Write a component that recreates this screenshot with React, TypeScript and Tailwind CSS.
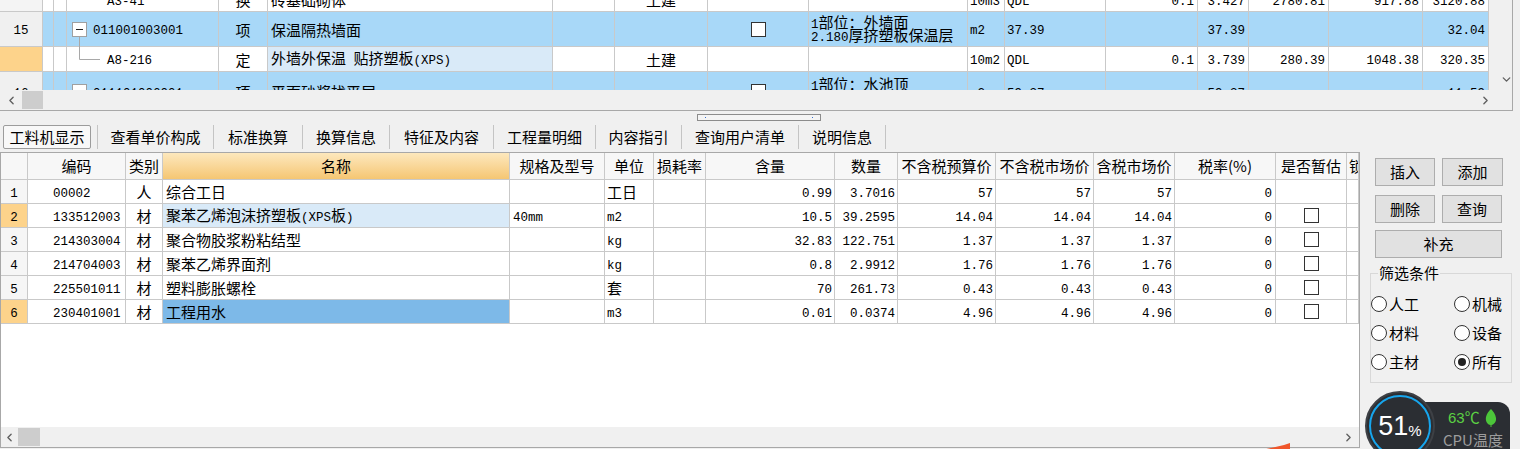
import React from "react";
import { ChevronLeft, ChevronRight, ChevronDown } from "lucide-react";

const UI = "font-['Noto_Sans_CJK_SC','Liberation_Sans',sans-serif]";

// split text into ascii / cjk runs so ascii gets the narrow mono look
function T({ s }: { s: string }) {
  const parts = s.match(/[\x00-\x7f]+|[^\x00-\x7f]+/g) ?? [];
  return (
    <span className="leading-[16px] whitespace-pre">
      {parts.map((p, i) =>
        /^[\x00-\x7f]+$/.test(p) ? (
          <span key={i} className="font-['Liberation_Mono',monospace] text-[12.5px]">
            {p}
          </span>
        ) : (
          <span key={i} className="font-['Noto_Sans_CJK_SC',sans-serif] text-[15px]">
            {p}
          </span>
        )
      )}
    </span>
  );
}

function Cell({ w, className = "", children }: { w: string; className?: string; children?: React.ReactNode }) {
  return (
    <div
      className={`${w} shrink-0 h-full border-r border-b border-[#c9c9c9] flex items-center overflow-hidden whitespace-nowrap ${className}`}
    >
      {children}
    </div>
  );
}

function Check() {
  return <div className="w-[15px] h-[15px] border border-[#333] bg-white" />;
}

function TreeBox({ line }: { line?: boolean }) {
  return (
    <div className="relative w-[15px] h-[15px] border border-[#a0a0a0] bg-white flex items-center justify-center shrink-0">
      <div className="w-[7px] h-px bg-[#222]" />
      {line && <div className="absolute top-[14px] left-[6px] w-px h-[12px] bg-[#a8a8a8]" />}
    </div>
  );
}

/* ---------------- top grid ---------------- */

const TW = [
  "w-[43px]", "w-[11px]", "w-[13px]", "w-[152px]", "w-[49px]", "w-[285px]", "w-[62px]", "w-[93px]",
  "w-[101px]", "w-[159px]", "w-[37px]", "w-[101px]", "w-[92px]", "w-[51px]", "w-[80px]", "w-[94px]", "w-[66px]",
];

function TopGrid() {
  const blue = "bg-[#a8d8f8]";
  return (
    <div className="h-[111px] w-[1513px] border-r border-b border-[#a8a8a8] bg-white flex flex-col">
      <div className="flex h-[90px]">
        <div className="w-[1489px] h-full overflow-hidden">
          <div className="-mt-[12px]">
            {/* partial row above */}
            <div className="flex h-[24px]">
              <Cell w={TW[0]} className="bg-[#f4f4f4]" />
              <Cell w={TW[1]} />
              <Cell w={TW[2]} />
              <Cell w={TW[3]} className="pl-[40px]"><T s="A3-41" /></Cell>
              <Cell w={TW[4]} className="justify-center"><T s="换" /></Cell>
              <Cell w={TW[5]} className="pl-[3px]"><T s="砖基础砌体" /></Cell>
              <Cell w={TW[6]} />
              <Cell w={TW[7]} className="justify-center"><T s="土建" /></Cell>
              <Cell w={TW[8]} />
              <Cell w={TW[9]} />
              <Cell w={TW[10]} className="pl-[2px]"><T s="10m3" /></Cell>
              <Cell w={TW[11]} className="pl-[2px]"><T s="QDL" /></Cell>
              <Cell w={TW[12]} className="justify-end pr-[3px]"><T s="0.1" /></Cell>
              <Cell w={TW[13]} className="justify-end pr-[3px]"><T s="3.427" /></Cell>
              <Cell w={TW[14]} className="justify-end pr-[3px]"><T s="2780.81" /></Cell>
              <Cell w={TW[15]} className="justify-end pr-[3px]"><T s="917.88" /></Cell>
              <Cell w={TW[16]} className="justify-end pr-[3px]"><T s="3120.88" /></Cell>
            </div>

            {/* row 15 */}
            <div className="flex h-[35px]">
              <Cell w={TW[0]} className="bg-[#f0f0f0] justify-center"><T s="15" /></Cell>
              <Cell w={TW[1]} className={blue} />
              <Cell w={TW[2]} className={blue} />
              <Cell w={TW[3]} className={`${blue} pl-[5px] gap-[6px] overflow-visible`}>
                <TreeBox line />
                <T s="011001003001" />
              </Cell>
              <Cell w={TW[4]} className={`${blue} justify-center`}><T s="项" /></Cell>
              <Cell w={TW[5]} className={`${blue} pl-[3px]`}><T s="保温隔热墙面" /></Cell>
              <Cell w={TW[6]} className={blue} />
              <Cell w={TW[7]} className={blue} />
              <Cell w={TW[8]} className={`${blue} justify-center`}><Check /></Cell>
              <Cell w={TW[9]} className={`${blue} pl-[2px] flex-col !items-start justify-center`}>
                <div className="h-[13px] flex items-center"><T s="1部位：外墙面" /></div>
                <div className="h-[13px] flex items-center"><T s="2.180厚挤塑板保温层" /></div>
              </Cell>
              <Cell w={TW[10]} className={`${blue} pl-[2px]`}><T s="m2" /></Cell>
              <Cell w={TW[11]} className={`${blue} pl-[2px]`}><T s="37.39" /></Cell>
              <Cell w={TW[12]} className={blue} />
              <Cell w={TW[13]} className={`${blue} justify-end pr-[3px]`}><T s="37.39" /></Cell>
              <Cell w={TW[14]} className={blue} />
              <Cell w={TW[15]} className={blue} />
              <Cell w={TW[16]} className={`${blue} justify-end pr-[3px]`}><T s="32.04" /></Cell>
            </div>

            {/* row A8-216 */}
            <div className="flex h-[25px]">
              <Cell w={TW[0]} className="bg-[#fdd38b]" />
              <Cell w={TW[1]} />
              <Cell w={TW[2]} />
              <Cell w={TW[3]}>
                <svg width="40" height="24" className="shrink-0">
                  <path d="M12.5 0 V12.5 H33" stroke="#a8a8a8" strokeWidth="1" fill="none" />
                </svg>
                <T s="A8-216" />
              </Cell>
              <Cell w={TW[4]} className="justify-center"><T s="定" /></Cell>
              <Cell w={TW[5]} className="bg-[#d9eaf8] pl-[3px]"><T s="外墙外保温 贴挤塑板(XPS)" /></Cell>
              <Cell w={TW[6]} />
              <Cell w={TW[7]} className="justify-center"><T s="土建" /></Cell>
              <Cell w={TW[8]} />
              <Cell w={TW[9]} />
              <Cell w={TW[10]} className="pl-[2px]"><T s="10m2" /></Cell>
              <Cell w={TW[11]} className="pl-[2px]"><T s="QDL" /></Cell>
              <Cell w={TW[12]} className="justify-end pr-[3px]"><T s="0.1" /></Cell>
              <Cell w={TW[13]} className="justify-end pr-[3px]"><T s="3.739" /></Cell>
              <Cell w={TW[14]} className="justify-end pr-[3px]"><T s="280.39" /></Cell>
              <Cell w={TW[15]} className="justify-end pr-[3px]"><T s="1048.38" /></Cell>
              <Cell w={TW[16]} className="justify-end pr-[3px]"><T s="320.35" /></Cell>
            </div>

            {/* row 16 (clipped by the scroll area) */}
            <div className="flex h-[40px]">
              <Cell w={TW[0]} className="bg-[#f0f0f0] justify-center"><T s="16" /></Cell>
              <Cell w={TW[1]} className={blue} />
              <Cell w={TW[2]} className={blue} />
              <Cell w={TW[3]} className={`${blue} pl-[5px] gap-[6px]`}>
                <TreeBox />
                <T s="011101006001" />
              </Cell>
              <Cell w={TW[4]} className={`${blue} justify-center`}><T s="项" /></Cell>
              <Cell w={TW[5]} className={`${blue} pl-[3px]`}><T s="平面砂浆找平层" /></Cell>
              <Cell w={TW[6]} className={blue} />
              <Cell w={TW[7]} className={blue} />
              <Cell w={TW[8]} className={`${blue} justify-center`}><Check /></Cell>
              <Cell w={TW[9]} className={`${blue} pl-[2px] flex-col !items-start justify-center`}>
                <div className="h-[13px] flex items-center"><T s="1部位：水池顶" /></div>
                <div className="h-[13px] flex items-center"><T s="2.20厚1:3水泥砂浆" /></div>
              </Cell>
              <Cell w={TW[10]} className={`${blue} pl-[2px]`}><T s="m2" /></Cell>
              <Cell w={TW[11]} className={`${blue} pl-[2px]`}><T s="59.37" /></Cell>
              <Cell w={TW[12]} className={blue} />
              <Cell w={TW[13]} className={`${blue} justify-end pr-[3px]`}><T s="59.37" /></Cell>
              <Cell w={TW[14]} className={blue} />
              <Cell w={TW[15]} className={blue} />
              <Cell w={TW[16]} className={`${blue} justify-end pr-[3px]`}><T s="11.59" /></Cell>
            </div>
          </div>
        </div>
        <div className="w-[23px] bg-[#f0f0f0] flex flex-col justify-end items-center pb-[4px] pl-[12px]">
          <ChevronDown size={13} strokeWidth={2.5} className="text-[#606060]" />
        </div>
      </div>
      <div className="h-[20px] flex items-center bg-[#f0f0f0]">
        <div className="w-[22px] flex justify-center">
          <ChevronLeft size={13} strokeWidth={2.5} className="text-[#606060]" />
        </div>
        <div className="w-[21px] h-[18px] bg-[#cdcdcd]" />
        <div className="flex-1" />
        <div className="w-[17px] mr-[18px] flex justify-center">
          <ChevronRight size={13} strokeWidth={2.5} className="text-[#606060]" />
        </div>
      </div>
    </div>
  );
}

/* ---------------- tabs ---------------- */

const TABS = [
  { label: "查看单价构成", w: "w-[115px]" },
  { label: "标准换算", w: "w-[88px]" },
  { label: "换算信息", w: "w-[86px]" },
  { label: "特征及内容", w: "w-[103px]" },
  { label: "工程量明细", w: "w-[101px]" },
  { label: "内容指引", w: "w-[85px]" },
  { label: "查询用户清单", w: "w-[116px]" },
  { label: "说明信息", w: "w-[86px]" },
];

function Tabs() {
  return (
    <div className="h-[28px] flex items-center pl-[3px] text-[15px]">
      <div className="w-[88px] h-[24px] border border-[#9c9c9c] rounded-[2px] bg-[#f8f8f8] flex items-center justify-center">
        工料机显示
      </div>
      <div className="w-[6px]" />
      {TABS.map((t) => (
        <React.Fragment key={t.label}>
          <div className="w-px h-[24px] bg-[#c4c4c4]" />
          <div className={`${t.w} h-[24px] flex items-center justify-center`}>{t.label}</div>
        </React.Fragment>
      ))}
      <div className="w-px h-[24px] bg-[#c4c4c4]" />
    </div>
  );
}

/* ---------------- bottom grid ---------------- */

const BW = [
  "w-[27px]", "w-[98px]", "w-[37px]", "w-[347px]", "w-[95px]", "w-[49px]", "w-[52px]", "w-[129px]",
  "w-[63px]", "w-[98px]", "w-[98px]", "w-[81px]", "w-[101px]", "w-[71px]", "w-[12px]",
];

const HEAD = [
  "", "编码", "类别", "名称", "规格及型号", "单位", "损耗率", "含量", "数量",
  "不含税预算价", "不含税市场价", "含税市场价", "税率(%)", "是否暂估", "锁定含量",
];

type Row = { n: string; code: string; kind: string; name: string; spec: string; unit: string; qty: string; amt: string; p1: string; p2: string; p3: string; tax: string; chk: boolean };

const ROWS: Row[] = [
  { n: "1", code: "00002", kind: "人", name: "综合工日", spec: "", unit: "工日", qty: "0.99", amt: "3.7016", p1: "57", p2: "57", p3: "57", tax: "0", chk: false },
  { n: "2", code: "133512003", kind: "材", name: "聚苯乙烯泡沫挤塑板(XPS板)", spec: "40mm", unit: "m2", qty: "10.5", amt: "39.2595", p1: "14.04", p2: "14.04", p3: "14.04", tax: "0", chk: true },
  { n: "3", code: "214303004", kind: "材", name: "聚合物胶浆粉粘结型", spec: "", unit: "kg", qty: "32.83", amt: "122.751", p1: "1.37", p2: "1.37", p3: "1.37", tax: "0", chk: true },
  { n: "4", code: "214704003", kind: "材", name: "聚苯乙烯界面剂", spec: "", unit: "kg", qty: "0.8", amt: "2.9912", p1: "1.76", p2: "1.76", p3: "1.76", tax: "0", chk: true },
  { n: "5", code: "225501011", kind: "材", name: "塑料膨胀螺栓", spec: "", unit: "套", qty: "70", amt: "261.73", p1: "0.43", p2: "0.43", p3: "0.43", tax: "0", chk: true },
  { n: "6", code: "230401001", kind: "材", name: "工程用水", spec: "", unit: "m3", qty: "0.01", amt: "0.0374", p1: "4.96", p2: "4.96", p3: "4.96", tax: "0", chk: true },
];

function BottomGrid() {
  return (
    <div className="w-[1360px] h-[296px] border border-[#a8a8a8] bg-white flex flex-col">
      <div className="flex h-[27px] text-[15px]">
        {HEAD.map((h, i) => (
          <Cell
            key={i}
            w={BW[i]}
            className={
              i === 3
                ? "justify-center bg-gradient-to-b from-[#fde8bd] to-[#f5c672]"
                : i === 14
                ? "pl-[2px] bg-[#f7f7f7]"
                : "justify-center bg-[#f7f7f7]"
            }
          >
            {h}
          </Cell>
        ))}
      </div>
      {ROWS.map((r) => {
        const hot = r.n === "2" || r.n === "6";
        return (
          <div key={r.n} className="flex h-[24px]">
            <Cell w={BW[0]} className={`justify-center ${hot ? "bg-[#fdd38b]" : "bg-[#f6f6f6]"}`}><T s={r.n} /></Cell>
            <Cell w={BW[1]} className="pl-[25px]"><T s={r.code} /></Cell>
            <Cell w={BW[2]} className="justify-center"><T s={r.kind} /></Cell>
            <Cell
              w={BW[3]}
              className={`pl-[3px] ${r.n === "6" ? "bg-[#7db9e8]" : r.n === "2" ? "bg-[#d9eaf8]" : ""}`}
            >
              <T s={r.name} />
            </Cell>
            <Cell w={BW[4]} className="pl-[3px]"><T s={r.spec} /></Cell>
            <Cell w={BW[5]} className="pl-[2px]"><T s={r.unit} /></Cell>
            <Cell w={BW[6]} />
            <Cell w={BW[7]} className="justify-end pr-[2px]"><T s={r.qty} /></Cell>
            <Cell w={BW[8]} className="justify-end pr-[2px]"><T s={r.amt} /></Cell>
            <Cell w={BW[9]} className="justify-end pr-[2px]"><T s={r.p1} /></Cell>
            <Cell w={BW[10]} className="justify-end pr-[2px]"><T s={r.p2} /></Cell>
            <Cell w={BW[11]} className="justify-end pr-[2px]"><T s={r.p3} /></Cell>
            <Cell w={BW[12]} className="justify-end pr-[3px]"><T s={r.tax} /></Cell>
            <Cell w={BW[13]} className="justify-center">{r.chk && <Check />}</Cell>
            <Cell w={BW[14]} />
          </div>
        );
      })}
      <div className="flex-1" />
      <div className="h-[20px] flex items-center bg-[#f0f0f0]">
        <div className="w-[17px] flex justify-center">
          <ChevronLeft size={13} strokeWidth={2.5} className="text-[#606060]" />
        </div>
        <div className="w-[22px] h-[18px] bg-[#cdcdcd]" />
        <div className="flex-1" />
        <div className="w-[17px] mr-[2px] flex justify-center">
          <ChevronRight size={13} strokeWidth={2.5} className="text-[#606060]" />
        </div>
      </div>
    </div>
  );
}

/* ---------------- right panel ---------------- */

function Btn({ w, children }: { w: string; children: React.ReactNode }) {
  return (
    <div className={`${w} h-[28px] border border-[#adadad] bg-[#e1e1e1] flex items-center justify-center text-[15px] leading-[20px]`}>
      {children}
    </div>
  );
}

function Radio({ label, on }: { label: string; on?: boolean }) {
  return (
    <div className="flex items-center gap-[2px] text-[15px] leading-[20px]">
      <div className="w-[16px] h-[16px] rounded-full border border-[#333] bg-white flex items-center justify-center">
        {on && <div className="w-[8px] h-[8px] rounded-full bg-[#222]" />}
      </div>
      {label}
    </div>
  );
}

function RightPanel() {
  return (
    <div className="w-[160px] pt-[6px] pl-[15px] text-[15px]">
      <div className="flex gap-[7px]">
        <Btn w="w-[60px]">插入</Btn>
        <Btn w="w-[61px]">添加</Btn>
      </div>
      <div className="flex gap-[7px] mt-[9px]">
        <Btn w="w-[60px]">删除</Btn>
        <Btn w="w-[60px]">查询</Btn>
      </div>
      <div className="mt-[7px]">
        <Btn w="w-[127px]">补充</Btn>
      </div>
      <fieldset className="-ml-[5px] mt-[5px] w-[142px] border border-[#d8d8d8] pb-[6px]">
        <legend className="ml-[7px] px-[1px] leading-[20px]">筛选条件</legend>
        <div className="grid grid-cols-[83px_1fr] pt-[6px]">
          <div className="h-[29px] flex items-center"><Radio label="人工" /></div>
          <div className="h-[29px] flex items-center"><Radio label="机械" /></div>
          <div className="h-[29px] flex items-center"><Radio label="材料" /></div>
          <div className="h-[29px] flex items-center"><Radio label="设备" /></div>
          <div className="h-[29px] flex items-center"><Radio label="主材" /></div>
          <div className="h-[29px] flex items-center"><Radio label="所有" on /></div>
        </div>
      </fieldset>
    </div>
  );
}

/* ---------------- floating widget ---------------- */

function CpuWidget() {
  return (
    <>
      <div className="absolute left-[1395px] top-[402px] w-[115px] h-[60px] rounded-[12px] bg-[#2b2e33] pl-[53px] pt-[6px]">
        <div className="flex items-center gap-[5px] text-[15px] leading-[20px] text-[#5bd143] font-['Liberation_Sans','Noto_Sans_CJK_SC',sans-serif]">
          63℃
          <svg width="12" height="18" viewBox="0 0 12 18">
            <path d="M6 0 C1 5 0 9 1.5 13 C2.5 15 4 16 5.5 16 L5.5 18 L6.5 18 L6.5 16 C9 15.5 11.5 13 11 9 C10.5 5 8 2 6 0 Z" fill="#4cc63a" />
          </svg>
        </div>
        <div className="text-[15px] leading-[20px] text-[#9c9c9c] -ml-[5px] mt-[2px]">CPU温度</div>
      </div>
      <div className="absolute left-[1365px] top-[391px] w-[70px] h-[70px] rounded-full bg-[#2b2e33] border-[2px] border-[#3d4045] flex items-center justify-center">
        <div className="w-[62px] h-[62px] rounded-full border-[2px] border-[#17a6ee] flex items-center justify-center text-white">
          <span className="text-[27px] leading-none font-['Liberation_Sans',sans-serif]">51</span>
          <span className="text-[15px] leading-none mt-[8px] font-['Liberation_Sans',sans-serif]">%</span>
        </div>
      </div>
      <svg className="absolute left-[1260px] top-[438px]" width="36" height="12" viewBox="0 0 36 12">
        <path d="M2 12 L24 7 L30 5 L30 12 Z" fill="#f0562b" />
      </svg>
    </>
  );
}

export default function App() {
  return (
    <div className={`relative h-[449px] w-[1520px] overflow-hidden bg-[#f0f0f0] text-black ${UI}`}>
      <TopGrid />
      <div className="h-[12px] pl-[697px] pt-[3px]">
        <div className="w-[124px] h-[7px] border border-[#8c8c8c] bg-[#f4f4f4] flex items-center justify-between px-[7px]">
          <div className="w-px h-px bg-[#3a6fd0]" />
          <div className="w-px h-px bg-[#3a6fd0]" />
        </div>
      </div>
      <Tabs />
      <div className="flex h-[298px] pt-px">
        <BottomGrid />
        <RightPanel />
      </div>
      <CpuWidget />
    </div>
  );
}
